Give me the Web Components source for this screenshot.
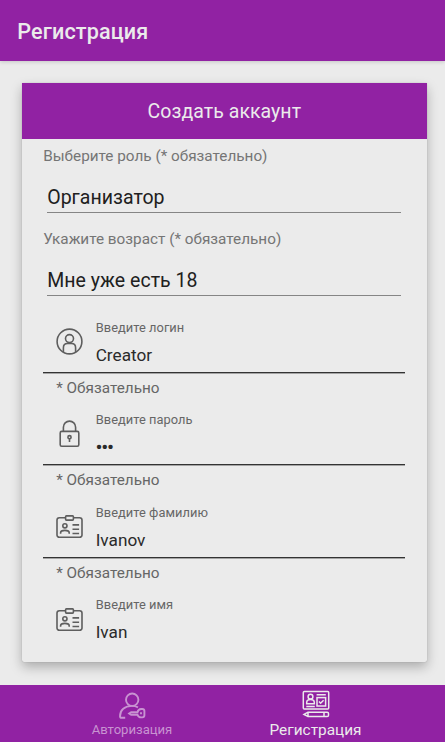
<!DOCTYPE html>
<html lang="ru">
<head>
<meta charset="utf-8">
<title>Регистрация</title>
<style>
html,body{margin:0;height:100%;overflow:hidden}
body{font-family:Roboto,"Noto Sans",sans-serif;background:#ebebeb}
</style>
</head>
<body>
<register-screen></register-screen>
<script>
const define = (name, html) => customElements.define(name, class extends HTMLElement {
  constructor() {
    super();
    const t = document.createElement('template');
    t.innerHTML = html;
    this.attachShadow({mode: 'open'}).append(t.content.cloneNode(true));
  }
});

const icons = {
  user: '<circle cx="13.5" cy="13.5" r="12.4"/><circle cx="13.5" cy="10.6" r="4"/><path d="M7.4 24v-4.3q0-4.2 4.1-4.2h4q4.1 0 4.1 4.2V24"/>',
  lock: '<rect x="4.2" y="11.4" width="18.6" height="14.8" rx="1.5"/><path d="M7.4 11.3V7.2a6.1 6.1 0 0 1 12.2 0v4.1"/><circle cx="13.5" cy="17.2" r="1.6"/><path d="M13.5 18.8v3.2"/>',
  badge: '<path d="M9.5 4.7H3.4A2.4 2.4 0 0 0 1 7.1v14.8a2.4 2.4 0 0 0 2.4 2.4h20.2a2.4 2.4 0 0 0 2.4-2.4V7.1a2.4 2.4 0 0 0-2.4-2.4h-6.1"/><rect x="9.6" y="2.9" width="7.8" height="4.2" rx=".8"/><circle cx="8.9" cy="12.8" r="2.1"/><path d="M4.6 20.8v-1q0-2.4 4.3-2.4t4.3 2.4v1M16.5 11.9h6.6M16.5 16.3h6.6M16.5 20.5h6.6"/>'
};

customElements.define('line-icon', class extends HTMLElement {
  connectedCallback() {
    this.attachShadow({mode: 'open'}).innerHTML = `<style>:host{display:block;width:27px;height:27px}svg{display:block}</style>
<svg width="27" height="27" viewBox="0 0 27 27" fill="none" stroke="#5e5e5e" stroke-width="1.6">${icons[this.getAttribute('name')]}</svg>`;
  }
});

define('app-header', `<style>
:host{display:block;height:60.5px;box-sizing:border-box;padding:2px 0 0 17.3px;background:#9122a3;color:#ebebeb;font-size:21.6px;letter-spacing:.12px;font-weight:500;line-height:60px;box-shadow:0 1px 4px rgba(0,0,0,.16);flex:none}
</style><slot></slot>`);

define('form-card', `<style>
:host{display:flex;flex-direction:column;height:579.5px;box-sizing:border-box;border-radius:2px;background:#ebebeb;box-shadow:0 0 1px rgba(0,0,0,.3),0 5px 12px rgba(0,0,0,.27)}
header{height:56px;line-height:58px;text-align:center;background:#9122a3;color:#ebebeb;font-size:19.5px;letter-spacing:.05px;flex:none}
section{padding:0 22px 0 21.5px}
</style><header><slot name="title"></slot></header><section><slot></slot></section>`);

define('select-field', `<style>
:host{display:block;height:83px;box-sizing:border-box;padding-top:7.5px}
.label{line-height:20px;font-size:15.3px;color:#757575}
.value{line-height:27px;margin:17.5px 4.5px 0 4px;height:28px;border-bottom:1px solid #858585;font-size:19.5px;letter-spacing:.03px;color:#202020}
</style><div class="label"><slot name="label"></slot></div><div class="value"><slot></slot></div>`);

customElements.define('text-field', class extends HTMLElement {
  connectedCallback() {
    this.attachShadow({mode: 'open'}).innerHTML = `<style>
:host{display:block;height:92.6px}
.box{display:flex;align-items:center;height:58px;padding-left:12.5px;gap:13px;border-bottom:1px solid #333;box-shadow:0 1px rgba(0,0,0,.3)}
line-icon{margin-bottom:2.5px}
.label{font-size:12.85px;line-height:18px;letter-spacing:.05px;color:#666}
.value{font-size:17.2px;line-height:24px;margin-top:6px;color:#2a2a2a}
.help{padding-left:13px;padding-top:3px;font-size:15.3px;line-height:24px;color:#666}
:host([last]) .box{border-color:transparent;box-shadow:none}
</style><div class="box"><line-icon name="${this.getAttribute('icon')}"></line-icon><div><div class="label"><slot name="label"></slot></div><div class="value"><slot></slot></div></div></div>
<div class="help"><slot name="help"></slot></div>`;
  }
});

define('nav-tab', `<style>
:host{display:flex;flex-direction:column;align-items:center;width:183.5px;color:#ebebeb;font-size:15.4px;padding-top:4px;box-sizing:border-box}
:host([inactive]){color:#c893d1;font-size:13.1px;padding-top:5px}
.text{line-height:20px;margin-top:2px}
:host([inactive]) .text{margin-top:1px}
::slotted(svg){display:block}
</style><slot name="icon"></slot><div class="text"><slot></slot></div>`);

define('bottom-nav', `<style>
:host{display:flex;justify-content:center;padding-left:2.5px;box-sizing:border-box;height:57.5px;background:#9122a3;flex:none}
</style><slot></slot>`);

define('register-screen', `<style>
:host{display:flex;flex-direction:column;width:445px;height:742px;background:#ebebeb;overflow:hidden}
main{flex:1;min-height:0;padding:22px 18px 0 21.7px;overflow:hidden}
.gap{height:9px}
.pw{display:inline-block;font-weight:900;letter-spacing:-.6px}
</style>
<app-header>Регистрация</app-header>
<main><form-card><span slot="title">Создать аккаунт</span>
<select-field><span slot="label">Выберите роль (* обязательно)</span>Организатор</select-field>
<select-field><span slot="label">Укажите возраст (* обязательно)</span>Мне уже есть 18</select-field>
<div class="gap"></div>
<text-field icon="user"><span slot="label">Введите логин</span>Creator<span slot="help">* Обязательно</span></text-field>
<text-field icon="lock"><span slot="label">Введите пароль</span><span class="pw">•••</span><span slot="help">* Обязательно</span></text-field>
<text-field icon="badge"><span slot="label">Введите фамилию</span>Ivanov<span slot="help">* Обязательно</span></text-field>
<text-field icon="badge" last><span slot="label">Введите имя</span>Ivan</text-field>
</form-card></main>
<bottom-nav>
<nav-tab inactive><svg slot="icon" width="28" height="29" viewBox="0 0 28 29" fill="none" stroke="currentColor" stroke-width="1.9"><circle cx="14.2" cy="9.7" r="6.2"/><path d="M20 17.3Q17 15.8 13.8 15.9 2.3 16.6 2 26.2q0 1.6 1.7 1.6h3.5"/><path d="M19.5 22.2a4 4 0 0 1 3.6-3.2h1.2q2.1 0 2.1 2.1v4.2q0 2.1-2.1 2.1h-1.2a4 4 0 0 1-3.6-2.6h-6.3l-2-1.3 2-1.3z"/><path d="M23 22.2v2" /></svg>Авторизация</nav-tab>
<nav-tab><svg slot="icon" width="28" height="29" viewBox="0 0 28 29" fill="none" stroke="currentColor" stroke-width="1.5"><rect x="1.3" y="2.5" width="25.4" height="17.6" rx="1"/><circle cx="8.5" cy="7.7" r="2.4"/><path d="M4.7 14.7v-1.3q0-2.8 3.8-2.8t3.8 2.8v1.3zM4.3 17.4h8.5M14.6 5.7h9.2"/><rect x="15" y="8.6" width="8.6" height="8.4"/><path d="m17 12.5 1.6 1.7 3-3"/><path d="M2 25.4l4-2.2h19.2q1.3 0 1.3 1.3v1.7q0 1.3-1.3 1.3H6zM6 23.2v4.3M22 23.2v4.3"/></svg>Регистрация</nav-tab>
</bottom-nav>`);
</script>
</body>
</html>
